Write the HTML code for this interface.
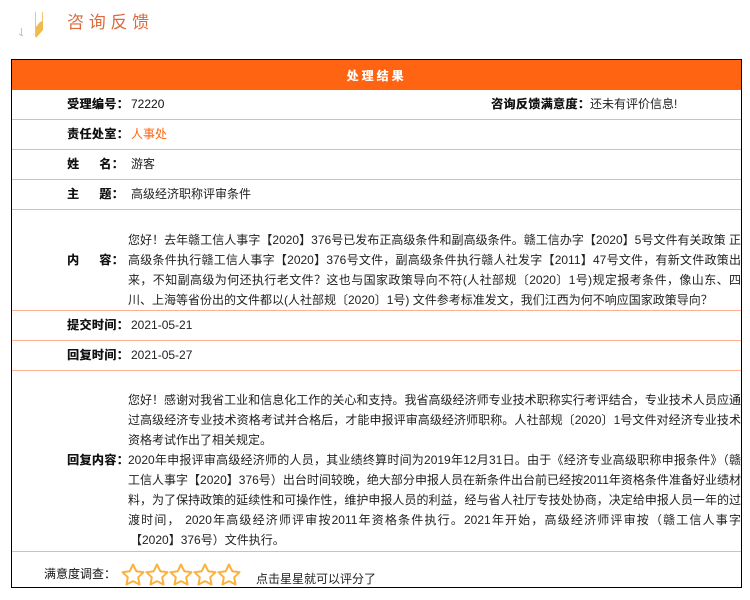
<!DOCTYPE html>
<html lang="zh"><head><meta charset="utf-8"><style>
html,body{margin:0;padding:0;background:#fff;width:750px;height:600px;overflow:hidden}
body{position:relative;font:12px/20px "Liberation Sans","WenQuanYi Zen Hei","Noto Sans CJK SC",sans-serif;color:#222}
.a{position:absolute;white-space:nowrap}
.l{font-weight:bold;color:#111;letter-spacing:.4px;text-shadow:.3px 0 0 #111}
.h{position:absolute;left:12px;width:729px;height:1px;background:#f2b49a}
.t{position:absolute;left:128px;width:613px;overflow:hidden}
.t div{height:20px;overflow:hidden;text-align:justify;text-align-last:justify}
.t div.n{white-space:nowrap;text-align:left;text-align-last:left}
.j{display:flex;justify-content:space-between;width:70px}
</style></head><body>
<div class="a" style="left:67px;top:11px;font-size:17px;line-height:24px;color:#dd6a3c;letter-spacing:4.700px">咨询反馈</div>
<svg class="a" style="left:0;top:0" width="60" height="42"><path d="M21.500 28V36M19 34L23 36" stroke="#c9c2ba" fill="none"/><rect x="33" y="34" width="1" height="1" fill="#e8d8b0"/><path d="M35.500 12V37M42.500 12V24" stroke="#efc56e" fill="none"/><path d="M36 27L40 22L43 21V30L36 38Z" fill="#eebb4c"/></svg>
<div class="a" style="left:11px;top:59px;width:729px;height:527px;border:1px solid #000"></div>
<div class="a" style="left:12px;top:60px;width:729px;height:30px;background:#ff6412;color:#fff;font-weight:bold;text-align:center;line-height:32px;letter-spacing:3px;text-shadow:.3px 0 0 #fff">处理结果</div>
<div class="h" style="top:119px"></div><div class="h" style="top:149px"></div><div class="h" style="top:179px"></div><div class="h" style="top:209px"></div>
<div class="h" style="top:310px;background:#ffb090"></div><div class="h" style="top:340px;background:#ffb090"></div><div class="h" style="top:370px;background:#ffb090"></div><div class="h" style="top:551px;background:#ffb090"></div>

<div class="a l" style="left:67px;top:94px">受理编号：</div><div class="a" style="left:131px;top:94px;color:#111">72220</div>
<div class="a l" style="left:491px;top:94px">咨询反馈满意度：</div><div class="a" style="left:590px;top:94px">还未有评价信息!</div>
<div class="a l" style="left:67px;top:124px">责任处室：</div><div class="a" style="left:131px;top:124px;color:#ff6412">人事处</div>
<div class="a l j" style="left:67px;top:154px;width:57px"><span>姓</span><span>名：</span></div><div class="a" style="left:131px;top:154px">游客</div>
<div class="a l j" style="left:67px;top:184px;width:57px"><span>主</span><span>题：</span></div><div class="a" style="left:131px;top:184px">高级经济职称评审条件</div>

<div class="a l j" style="left:67px;top:250px;width:57px"><span>内</span><span>容：</span></div>
<div class="t" style="top:230px">
<div>您好！去年赣工信人事字【2020】376号已发布正高级条件和副高级条件。赣工信办字【2020】5号文件有关政策 正</div>
<div>高级条件执行赣工信人事字【2020】376号文件，副高级条件执行赣人社发字【2011】47号文件，有新文件政策出</div>
<div>来，不知副高级为何还执行老文件？这也与国家政策导向不符(人社部规〔2020〕1号)规定报考条件，像山东、四</div>
<div class="n">川、上海等省份出的文件都以(人社部规〔2020〕1号) 文件参考标准发文，我们江西为何不响应国家政策导向？</div>
</div>
<div class="a l" style="left:67px;top:315px">提交时间：</div><div class="a" style="left:131px;top:315px">2021-05-21</div>
<div class="a l" style="left:67px;top:345px">回复时间：</div><div class="a" style="left:131px;top:345px">2021-05-27</div>

<div class="a l" style="left:67px;top:450px">回复内容：</div>
<div class="t" style="top:390px">
<div>您好！感谢对我省工业和信息化工作的关心和支持。我省高级经济师专业技术职称实行考评结合，专业技术人员应通</div>
<div>过高级经济专业技术资格考试并合格后，才能申报评审高级经济师职称。人社部规〔2020〕1号文件对经济专业技术</div>
<div class="n">资格考试作出了相关规定。</div>
<div>2020年申报评审高级经济师的人员，其业绩终算时间为2019年12月31日。由于《经济专业高级职称申报条件》（赣</div>
<div>工信人事字【2020】376号）出台时间较晚，绝大部分申报人员在新条件出台前已经按2011年资格条件准备好业绩材</div>
<div>料，为了保持政策的延续性和可操作性，维护申报人员的利益，经与省人社厅专技处协商，决定给申报人员一年的过</div>
<div>渡时间， 2020年高级经济师评审按2011年资格条件执行。2021年开始，高级经济师评审按（赣工信人事字</div>
<div class="n" style="padding-left:2px">【2020】376号）文件执行。</div>
</div>
<div class="a" style="left:44px;top:564px;color:#111">满意度调查：</div>
<svg class="a" style="left:120px;top:562px" width="125" height="26"><defs><path id="s" d="M13 2.500L16.300 9.200 23.500 10.200 18.200 15.300 19.500 22.500 13 19.100 6.500 22.500 7.800 15.300 2.500 10.200 9.700 9.200Z" fill="#fff" stroke="#fbb040" stroke-width="2" stroke-linejoin="round"/></defs><use href="#s" x="0"/><use href="#s" x="24"/><use href="#s" x="48"/><use href="#s" x="72"/><use href="#s" x="96"/></svg>
<div class="a" style="left:256px;top:569px">点击星星就可以评分了</div>
</body></html>
